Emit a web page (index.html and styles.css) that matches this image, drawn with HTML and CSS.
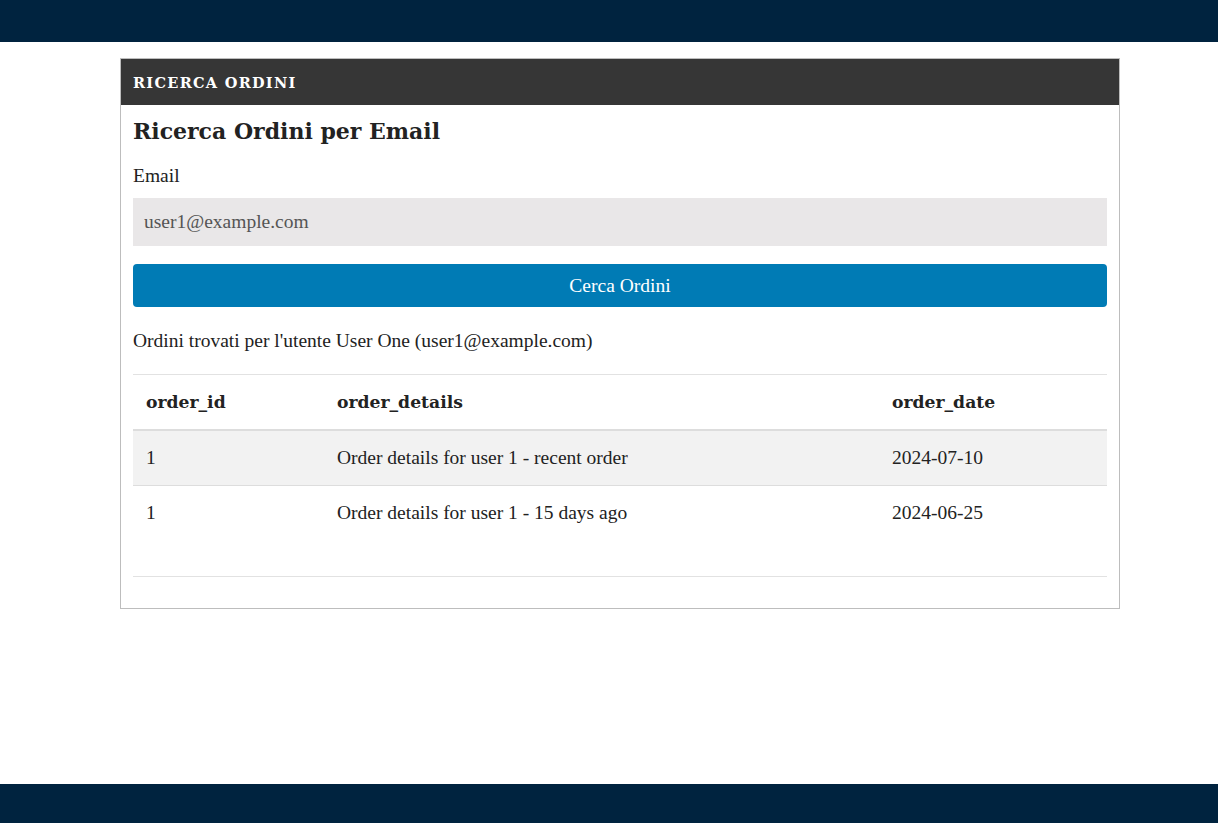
FILE: index.html
```html
<!DOCTYPE html>
<html lang="it">
<head>
<meta charset="utf-8">
<title>Ricerca Ordini</title>
<link rel="stylesheet" href="styles.css">
</head>
<body>
<header class="topbar"></header>
<main class="main">
  <section class="card">
    <div class="card-head">Ricerca Ordini</div>
    <div class="card-body">
      <h2 class="title">Ricerca Ordini per Email</h2>
      <label class="label" for="email">Email</label>
      <input class="input" id="email" type="text" value="user1@example.com">
      <button class="btn" type="button">Cerca Ordini</button>
      <p class="result">Ordini trovati per l'utente User One (user1@example.com)</p>
      <div class="table-wrap">
        <table class="table">
          <thead>
            <tr><th class="c1">order_id</th><th class="c2">order_details</th><th class="c3">order_date</th></tr>
          </thead>
          <tbody>
            <tr class="odd"><td>1</td><td>Order details for user 1 - recent order</td><td>2024-07-10</td></tr>
            <tr><td>1</td><td>Order details for user 1 - 15 days ago</td><td>2024-06-25</td></tr>
          </tbody>
        </table>
      </div>
    </div>
  </section>
</main>
<footer class="footbar"></footer>
</body>
</html>
```
FILE: styles.css
```css
html, body { margin: 0; padding: 0; }
body {
  font-family: "Liberation Serif", "DejaVu Serif", serif;
  color: #222;
  background: #fff;
  min-height: 823px;
  display: flex;
  flex-direction: column;
}
.topbar { height: 42px; background: #00233f; }
.footbar { height: 39px; background: #00233f; margin-top: auto; }
.main { display: flex; padding: 16px 0 0 120px; }
.card { width: 998px; border: 1px solid #bdbdbd; }
.card-head {
  height: 46px;
  background: #363636;
  color: #fff;
  font-family: "DejaVu Serif", serif;
  font-weight: bold;
  font-size: 14.5px;
  letter-spacing: 1.3px;
  text-transform: uppercase;
  display: flex;
  align-items: center;
  padding: 0 12px;
}
.card-body { padding: 12px 12px 31px; display: flex; flex-direction: column; }
.title {
  margin: 0;
  font-family: "DejaVu Serif", serif;
  font-size: 22px;
  line-height: 28px;
  font-weight: bold;
  color: #222;
}
.label { margin-top: 20px; font-size: 19.5px; line-height: 22px; }
.input {
  margin-top: 11px;
  height: 48px;
  box-sizing: border-box;
  border: none;
  background: #e9e7e8;
  padding: 0 11px;
  font-family: inherit;
  font-size: 19.5px;
  color: #555;
  outline: none;
}
.btn {
  margin-top: 18px;
  height: 43px;
  border: none;
  border-radius: 4px;
  background: #007bb5;
  color: #fff;
  font-family: inherit;
  font-size: 19.5px;
}
.result { margin: 23px 0 0; font-size: 19.5px; line-height: 22px; }
.table-wrap { margin-top: 22px; border-top: 1px solid #e2e2e2; border-bottom: 1px solid #e2e2e2; padding-bottom: 36px; }
.table { width: 100%; border-collapse: collapse; table-layout: fixed; font-size: 19.5px; }
.table th {
  text-align: left;
  font-family: "DejaVu Serif", serif;
  font-weight: bold;
  font-size: 17.2px;
  height: 55px;
  padding: 0 13px;
  border-bottom: 2px solid #dddddd;
  box-sizing: border-box;
}
.table td { height: 54px; padding: 0 13px; border-bottom: 1px solid #dddddd; }
.table tbody tr:last-child td { border-bottom: none; }
.odd { background: #f2f2f2; }
.c1 { width: 191px; }
.c2 { width: 555px; }
```
